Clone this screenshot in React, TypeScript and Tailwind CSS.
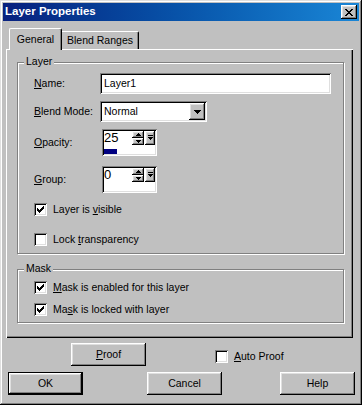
import React from 'react';

// --- classic 3D border styles ---
const raised =
  'bg-[#c0c0c0] shadow-[inset_-1px_-1px_#000,inset_1px_1px_#fff,inset_-2px_-2px_#808080,inset_2px_2px_#dfdfdf]';
const sunken =
  'bg-white shadow-[inset_1px_1px_#808080,inset_-1px_-1px_#fff,inset_2px_2px_#000,inset_-2px_-2px_#dfdfdf]';
const etched = 'border border-[#808080] shadow-[inset_1px_1px_#fff,1px_1px_#fff]';

const CheckMark = () => (
  <svg width="7" height="7" viewBox="0 0 7 7" shapeRendering="crispEdges" fill="#000">
    <rect x="6" y="0" width="1" height="1" />
    <rect x="5" y="1" width="2" height="1" />
    <rect x="0" y="2" width="1" height="1" />
    <rect x="4" y="2" width="3" height="1" />
    <rect x="0" y="3" width="2" height="1" />
    <rect x="3" y="3" width="3" height="1" />
    <rect x="0" y="4" width="5" height="1" />
    <rect x="1" y="5" width="3" height="1" />
    <rect x="2" y="6" width="1" height="1" />
  </svg>
);

const CloseGlyph = () => (
  <svg width="8" height="7" viewBox="0 0 8 7" shapeRendering="crispEdges" fill="#000">
    <rect x="0" y="0" width="2" height="1" />
    <rect x="6" y="0" width="2" height="1" />
    <rect x="1" y="1" width="2" height="1" />
    <rect x="5" y="1" width="2" height="1" />
    <rect x="2" y="2" width="4" height="1" />
    <rect x="3" y="3" width="2" height="1" />
    <rect x="2" y="4" width="4" height="1" />
    <rect x="1" y="5" width="2" height="1" />
    <rect x="5" y="5" width="2" height="1" />
    <rect x="0" y="6" width="2" height="1" />
    <rect x="6" y="6" width="2" height="1" />
  </svg>
);

const DownTriangle = () => (
  <svg width="7" height="4" viewBox="0 0 7 4" shapeRendering="crispEdges" fill="#000">
    <rect x="0" y="0" width="7" height="1" />
    <rect x="1" y="1" width="5" height="1" />
    <rect x="2" y="2" width="3" height="1" />
    <rect x="3" y="3" width="1" height="1" />
  </svg>
);

const TinyArrow = ({ up }: { up?: boolean }) => (
  <svg width="5" height="3" viewBox="0 0 5 3" shapeRendering="crispEdges" fill="#000">
    {up ? (
      <>
        <rect x="2" y="0" width="1" height="1" />
        <rect x="1" y="1" width="3" height="1" />
        <rect x="0" y="2" width="5" height="1" />
      </>
    ) : (
      <>
        <rect x="0" y="0" width="5" height="1" />
        <rect x="1" y="1" width="3" height="1" />
        <rect x="2" y="2" width="1" height="1" />
      </>
    )}
  </svg>
);

const BarArrow = () => (
  <svg width="5" height="6" viewBox="0 0 5 6" shapeRendering="crispEdges" fill="#000">
    <rect x="0" y="0" width="5" height="1" />
    <rect x="0" y="2" width="5" height="1" />
    <rect x="1" y="3" width="3" height="1" />
    <rect x="2" y="4" width="1" height="1" />
  </svg>
);

function CheckBox({ checked, children, className = '' }: { checked?: boolean; children: React.ReactNode; className?: string }) {
  return (
    <div className={`flex items-center gap-[6px] h-[13px] ${className}`}>
      <span className={`w-[13px] h-[13px] flex items-center justify-center shrink-0 ${sunken}`}>
        {checked && <CheckMark />}
      </span>
      <span className="leading-[13px] whitespace-nowrap">{children}</span>
    </div>
  );
}

function GroupBox({ title, className = '', children }: { title: string; className?: string; children: React.ReactNode }) {
  return (
    <div className={`relative ${etched} ${className}`}>
      <span className="absolute -top-[8px] left-[6px] px-[2px] bg-[#c0c0c0] leading-[13px]">{title}</span>
      {children}
    </div>
  );
}

function SpinBox({ value }: { value: number }) {
  const barWidth = Math.round((value / 100) * 51);
  return (
    <div className={`w-[55px] h-[27px] p-[2px] flex flex-col ${sunken}`}>
      <div className="flex h-[14px]">
        <span className="flex-1 text-[13px] leading-[14px]">{value}</span>
        <div className="flex flex-col w-[12px]">
          <span className={`h-[7px] flex items-center justify-center ${raised}`}>
            <TinyArrow up />
          </span>
          <span className={`h-[7px] flex items-center justify-center ${raised}`}>
            <TinyArrow />
          </span>
        </div>
        <span className={`ml-[1px] w-[10px] h-[14px] flex items-center justify-center ${raised}`}>
          <BarArrow />
        </span>
      </div>
      <div className="mt-auto h-[5px]">
        {barWidth > 0 && <div className="h-full bg-[#000080]" style={{ width: barWidth }} />}
      </div>
    </div>
  );
}

function Btn({ children, isDefault, className = '' }: { children: React.ReactNode; isDefault?: boolean; className?: string }) {
  return (
    <button
      className={`w-[75px] h-[23px] flex items-center justify-center leading-none ${raised} ${
        isDefault ? 'border border-black' : ''
      } ${className}`}
    >
      {children}
    </button>
  );
}

export default function App() {
  return (
    <div className="w-[362px] h-[405px] p-[3px] bg-[#c0c0c0] text-black text-[10.5px] font-['Liberation_Sans',Arial,sans-serif] overflow-hidden shadow-[inset_-1px_-1px_#000,inset_1px_1px_#dfdfdf,inset_-2px_-2px_#808080,inset_2px_2px_#fff]">
      {/* Title bar */}
      <div className="h-[18px] flex items-center justify-between px-[2px] bg-linear-to-r from-[#08207e] to-[#1a86d6]">
        <span className="text-white font-bold text-[11.5px] leading-none">Layer Properties</span>
        <button className={`w-[16px] h-[14px] flex items-center justify-center ${raised}`}>
          <CloseGlyph />
        </button>
      </div>

      {/* Tabs */}
      <div className="flex items-end h-[21px] mt-[7px] ml-[6px]">
        <div className="relative z-10 h-[22px] -mb-[1px] w-[53px] flex items-center justify-center bg-[#c0c0c0] border-l border-t border-white rounded-tl-[2px] rounded-tr-[2px] border-r border-r-black shadow-[inset_-1px_0_#808080]">
          General
        </div>
        <div className="h-[18px] w-[77px] flex items-center justify-center border-t border-white border-r border-r-black rounded-tr-[2px] shadow-[inset_-1px_0_#808080]">
          Blend Ranges
        </div>
      </div>

      {/* Tab panel */}
      <div className="ml-[3px] w-[347px] h-[289px] pt-[13px] pl-[11px] shadow-[inset_1px_1px_#fff,inset_-1px_-1px_#000,inset_-2px_-2px_#808080]">
        <GroupBox title="Layer" className="w-[327px] h-[192px] pl-[16px] pt-[10px]">
          <div className="flex items-center h-[21px]">
            <span className="w-[66px]">
              <u>N</u>ame:
            </span>
            <div className={`w-[231px] h-[21px] pl-[4px] leading-[21px] ${sunken}`}>Layer1</div>
          </div>
          <div className="flex items-center h-[21px] mt-[7px]">
            <span className="w-[66px]">
              <u>B</u>lend Mode:
            </span>
            <div className={`w-[107px] h-[21px] p-[2px] flex ${sunken}`}>
              <span className="flex-1 pl-[2px] leading-[17px]">Normal</span>
              <span className={`w-[16px] h-[17px] flex items-center justify-center ${raised}`}>
                <DownTriangle />
              </span>
            </div>
          </div>
          <div className="flex items-center h-[27px] mt-[7px]">
            <span className="w-[68px]">
              <u>O</u>pacity:
            </span>
            <SpinBox value={25} />
          </div>
          <div className="flex items-center h-[27px] mt-[10px]">
            <span className="w-[68px]">
              <u>G</u>roup:
            </span>
            <SpinBox value={0} />
          </div>
          <CheckBox checked className="mt-[10px]">
            Layer is <u>v</u>isible
          </CheckBox>
          <CheckBox className="mt-[17px]">
            Lock <u>t</u>ransparency
          </CheckBox>
        </GroupBox>

        <GroupBox title="Mask" className="mt-[15px] w-[327px] h-[54px] pl-[16px] pt-[11px]">
          <CheckBox checked>
            <u>M</u>ask is enabled for this layer
          </CheckBox>
          <CheckBox checked className="mt-[9px]">
            Ma<u>s</u>k is locked with layer
          </CheckBox>
        </GroupBox>
      </div>

      {/* Proof row */}
      <div className="flex mt-[5px] h-[23px]">
        <Btn className="ml-[68px]">
          <u>P</u>roof
        </Btn>
        <CheckBox className="ml-[69px] mt-[7px]">
          <u>A</u>uto Proof
        </CheckBox>
      </div>

      {/* Dialog buttons */}
      <div className="flex mt-[6px]">
        <Btn isDefault className="ml-[5px]">
          OK
        </Btn>
        <Btn className="ml-[64px]">Cancel</Btn>
        <Btn className="ml-[58px]">Help</Btn>
      </div>
    </div>
  );
}
